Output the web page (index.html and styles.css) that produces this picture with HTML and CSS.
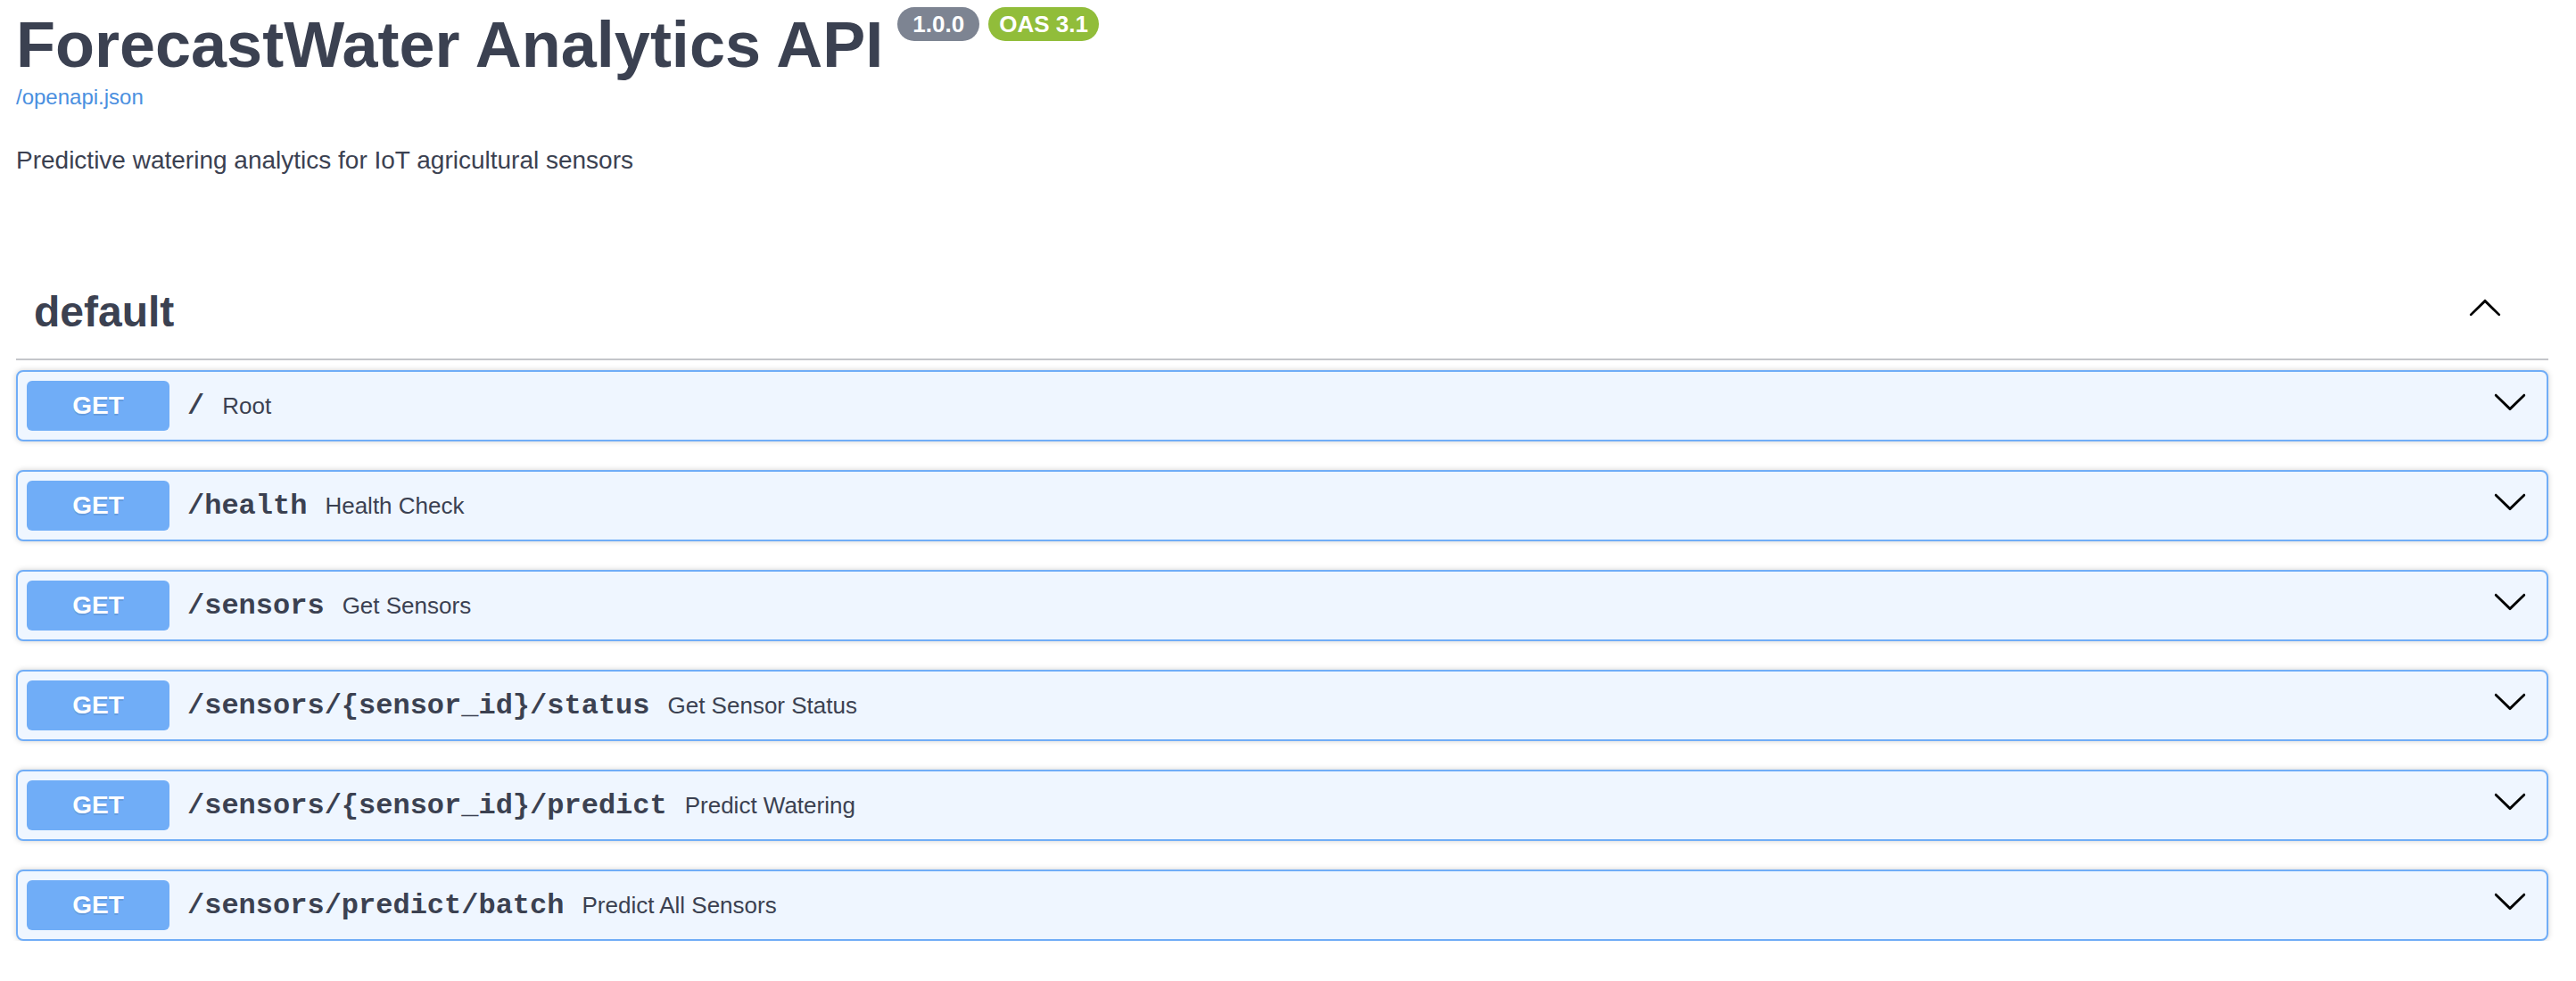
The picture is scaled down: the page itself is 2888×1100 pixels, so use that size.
FILE: index.html
```html
<!DOCTYPE html>
<html lang="en">
<head>
<meta charset="utf-8">
<title>ForecastWater Analytics API</title>
<link rel="stylesheet" href="styles.css">
</head>
<body>
<div class="wrapper">
  <div class="info">
    <h2 class="title">
      <span class="title-text">ForecastWater Analytics API</span>
      <span class="badge badge-version">1.0.0</span>
      <span class="badge badge-oas">OAS 3.1</span>
    </h2>
    <a class="base-url" href="#">/openapi.json</a>
    <p class="description">Predictive watering analytics for IoT agricultural sensors</p>
  </div>

  <section class="tag-section">
    <h3 class="tag">
      <span class="tag-name">default</span>
      <svg class="tag-arrow" viewBox="0 0 20 20" width="40" height="40"><path d="M17.418 14.908c.272.268.709.268.979 0s.271-.701 0-.969l-7.908-7.83c-.27-.268-.707-.268-.979 0l-7.908 7.83c-.27.268-.27.701 0 .969.271.268.709.268.979 0L10 7.767l7.418 7.141z"/></svg>
    </h3>

    <div class="ops">
      <div class="opblock">
        <span class="method">GET</span>
        <span class="path">/</span>
        <span class="summary">Root</span>
        <svg class="op-arrow" viewBox="0 0 20 20" width="40" height="40"><path d="M17.418 6.109c.272-.268.709-.268.979 0s.271.701 0 .969l-7.908 7.83c-.27.268-.707.268-.979 0l-7.908-7.83c-.27-.268-.27-.701 0-.969.271-.268.709-.268.979 0L10 13.25l7.418-7.141z"/></svg>
      </div>
      <div class="opblock">
        <span class="method">GET</span>
        <span class="path">/health</span>
        <span class="summary">Health Check</span>
        <svg class="op-arrow" viewBox="0 0 20 20" width="40" height="40"><path d="M17.418 6.109c.272-.268.709-.268.979 0s.271.701 0 .969l-7.908 7.83c-.27.268-.707.268-.979 0l-7.908-7.83c-.27-.268-.27-.701 0-.969.271-.268.709-.268.979 0L10 13.25l7.418-7.141z"/></svg>
      </div>
      <div class="opblock">
        <span class="method">GET</span>
        <span class="path">/sensors</span>
        <span class="summary">Get Sensors</span>
        <svg class="op-arrow" viewBox="0 0 20 20" width="40" height="40"><path d="M17.418 6.109c.272-.268.709-.268.979 0s.271.701 0 .969l-7.908 7.83c-.27.268-.707.268-.979 0l-7.908-7.830c-.27-.268-.27-.701 0-.969.271-.268.709-.268.979 0L10 13.25l7.418-7.141z"/></svg>
      </div>
      <div class="opblock">
        <span class="method">GET</span>
        <span class="path">/sensors/{sensor_id}/status</span>
        <span class="summary">Get Sensor Status</span>
        <svg class="op-arrow" viewBox="0 0 20 20" width="40" height="40"><path d="M17.418 6.109c.272-.268.709-.268.979 0s.271.701 0 .969l-7.908 7.83c-.27.268-.707.268-.979 0l-7.908-7.83c-.27-.268-.27-.701 0-.969.271-.268.709-.268.979 0L10 13.25l7.418-7.141z"/></svg>
      </div>
      <div class="opblock">
        <span class="method">GET</span>
        <span class="path">/sensors/{sensor_id}/predict</span>
        <span class="summary">Predict Watering</span>
        <svg class="op-arrow" viewBox="0 0 20 20" width="40" height="40"><path d="M17.418 6.109c.272-.268.709-.268.979 0s.271.701 0 .969l-7.908 7.83c-.27.268-.707.268-.979 0l-7.908-7.83c-.27-.268-.27-.701 0-.969.271-.268.709-.268.979 0L10 13.25l7.418-7.141z"/></svg>
      </div>
      <div class="opblock">
        <span class="method">GET</span>
        <span class="path">/sensors/predict/batch</span>
        <span class="summary">Predict All Sensors</span>
        <svg class="op-arrow" viewBox="0 0 20 20" width="40" height="40"><path d="M17.418 6.109c.272-.268.709-.268.979 0s.271.701 0 .969l-7.908 7.83c-.27.268-.707.268-.979 0l-7.908-7.83c-.27-.268-.27-.701 0-.969.271-.268.709-.268.979 0L10 13.25l7.418-7.141z"/></svg>
      </div>
    </div>
  </section>
</div>
</body>
</html>
```

FILE: styles.css
```css
html, body {
  margin: 0;
  padding: 0;
  background: #ffffff;
}

body {
  font-family: "Liberation Sans", Arial, sans-serif;
  color: #3b4151;
}

.wrapper {
  padding: 9px 31px 0 18px;
}

.info {
  margin: 0;
}

.title {
  display: flex;
  align-items: flex-start;
  margin: 0;
  font-size: 72px;
  font-weight: 700;
  line-height: normal;
  color: #3b4151;
}

.title-text {
  display: block;
}

.badge {
  display: inline-flex;
  align-items: center;
  height: 38px;
  margin-top: -1px;
  border-radius: 19px;
  font-size: 26px;
  font-weight: 700;
  color: #ffffff;
  line-height: 1;
}

.badge-version {
  margin-left: 16px;
  padding: 0 17px;
  background: #7d8492;
}

.badge-oas {
  margin-left: 10px;
  padding: 0 12px;
  background: #91bd3a;
}

.base-url {
  display: block;
  margin-top: 4px;
  font-size: 24px;
  line-height: normal;
  color: #4a8fe0;
  text-decoration: none;
}

.description {
  margin: 41px 0 0;
  font-size: 28px;
  line-height: normal;
  color: #3b4151;
}

.tag-section {
  margin-top: 106px;
}

.tag {
  display: flex;
  align-items: center;
  box-sizing: border-box;
  height: 102px;
  margin: 0 0 11px;
  padding: 0 51px 5px 20px;
  border-bottom: 2px solid rgba(59, 65, 81, 0.3);
  font-size: 48px;
  font-weight: 700;
  line-height: normal;
  color: #3b4151;
}

.tag-name {
  flex: 1 1 auto;
}

.tag-arrow {
  display: block;
  flex: none;
  margin-bottom: 12px;
  fill: #000000;
}

.ops {
  display: flex;
  flex-direction: column;
  gap: 32px;
}

.opblock {
  display: flex;
  align-items: center;
  box-sizing: border-box;
  height: 80px;
  padding: 0 21px 0 10px;
  border: 2px solid #70adf7;
  border-radius: 8px;
  background: #eff6ff;
  box-shadow: 0 0 6px rgba(0, 0, 0, 0.19);
}

.method {
  flex: none;
  width: 160px;
  height: 56px;
  display: flex;
  align-items: center;
  justify-content: center;
  border-radius: 6px;
  background: #70adf7;
  color: #ffffff;
  font-size: 28px;
  font-weight: 700;
  text-shadow: 0 2px 0 rgba(0, 0, 0, 0.1);
}

.path {
  flex: none;
  padding: 0 20px;
  font-family: "Liberation Mono", "Courier New", monospace;
  font-size: 32px;
  font-weight: 700;
  color: #3b4151;
}

.summary {
  flex: 1 1 auto;
  font-size: 26px;
  color: #3b4151;
}

.op-arrow {
  display: block;
  flex: none;
  margin-bottom: 10px;
  fill: #000000;
}
```
